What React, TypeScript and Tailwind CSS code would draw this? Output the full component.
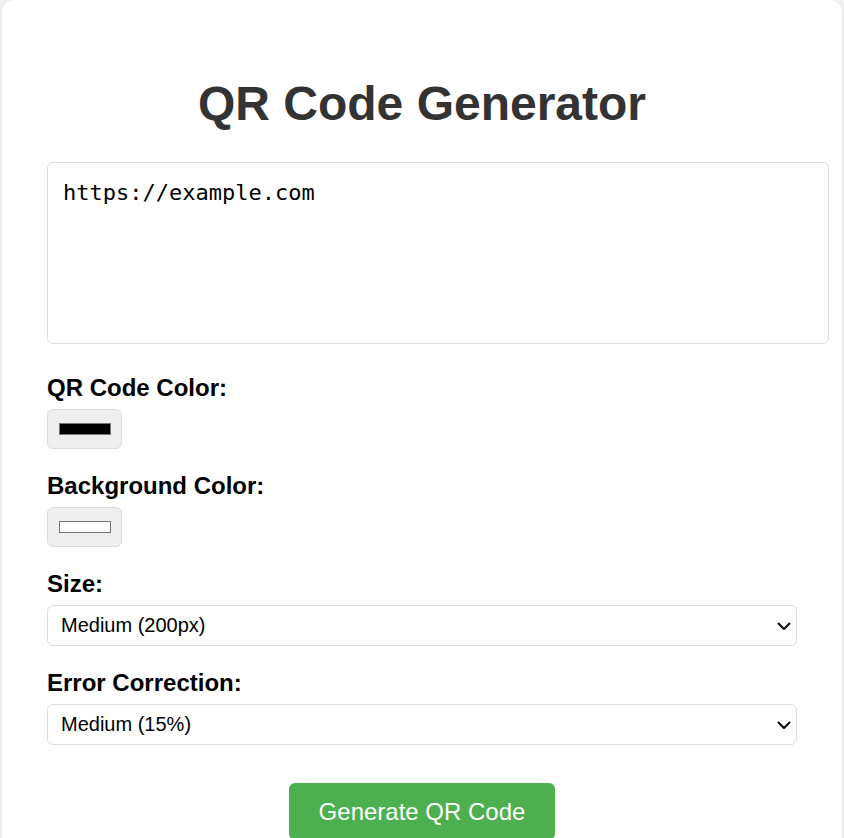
import { useState } from "react";

function Swatch({ color }: { color: string }) {
  return (
    <div className="w-[75px] h-[40px] rounded-[6px] border border-[#dcdcdc] bg-[#efefef] flex items-center justify-center">
      <div className="w-[52px] h-[12px] border border-[#767676]" style={{ background: color }} />
    </div>
  );
}

function Select({ value, options }: { value: string; options: string[] }) {
  return (
    <div className="relative w-[750px]">
      <select
        defaultValue={value}
        className="appearance-none block w-full h-[41px] rounded-[6px] border border-[#dddddd] bg-white pl-[13px] pr-[40px] pt-[1px] text-[20px] leading-[23px] text-black"
      >
        {options.map((o) => (
          <option key={o}>{o}</option>
        ))}
      </select>
      <svg
        className="absolute right-[6px] top-[17px] w-[14px] h-[8px] pointer-events-none"
        viewBox="0 0 14 8"
        fill="none"
        stroke="#111"
        strokeWidth={2.2}
      >
        <path d="M1 1l6 6 6-6" />
      </svg>
    </div>
  );
}

export default function App() {
  const [text, setText] = useState("https://example.com");

  return (
    <div className="min-h-screen bg-[#f4f4f4] px-[2px] font-['Liberation_Sans',Arial,sans-serif]">
      <div className="bg-white rounded-[12px] shadow-[0_0_8px_rgba(0,0,0,0.08)] px-[45px] pt-[76px] pb-[45px]">
        <h1 className="text-center text-[48px] leading-[55px] font-bold text-[#333333] mb-[31px]">
          QR Code Generator
        </h1>

        <textarea
          value={text}
          onChange={(e) => setText(e.target.value)}
          className="block w-[782px] h-[182px] resize-none rounded-[6px] border border-[#dddddd] p-[15px] text-[22px] leading-[1.38] text-black font-['DejaVu_Sans_Mono',monospace] mb-[29px] outline-none"
        />

        <div className="mb-[22.5px]">
          <label className="block text-[24px] leading-[30px] font-bold text-black mb-[5.5px]">QR Code Color:</label>
          <Swatch color="#000000" />
        </div>

        <div className="mb-[22.5px]">
          <label className="block text-[24px] leading-[30px] font-bold text-black mb-[5.5px]">Background Color:</label>
          <Swatch color="#ffffff" />
        </div>

        <div className="mb-[22.5px]">
          <label className="block text-[24px] leading-[30px] font-bold text-black mb-[5.5px]">Size:</label>
          <Select value="Medium (200px)" options={["Small (150px)", "Medium (200px)", "Large (300px)"]} />
        </div>

        <div>
          <label className="block text-[24px] leading-[30px] font-bold text-black mb-[5.5px]">Error Correction:</label>
          <Select value="Medium (15%)" options={["Low (7%)", "Medium (15%)", "Quartile (25%)", "High (30%)"]} />
        </div>

        <div className="flex justify-center mt-[38px]">
          <button
            type="button"
            className="bg-[#4caf50] text-white text-[24px] leading-[27px] px-[30px] py-[15px] rounded-[6px]"
          >
            Generate QR Code
          </button>
        </div>
      </div>
    </div>
  );
}
